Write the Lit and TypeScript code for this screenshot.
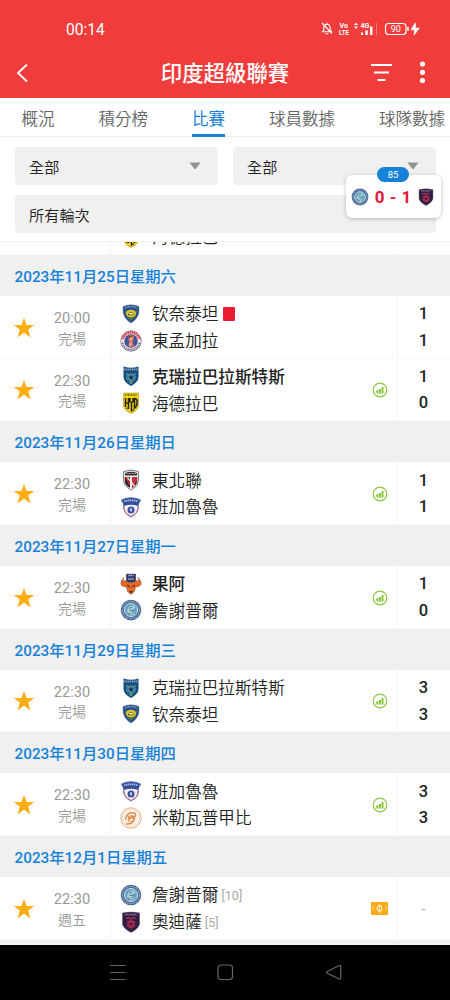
import {css, html, LitElement, nothing, svg} from 'lit';
import {customElement, property} from 'lit/decorators.js';
import {classMap} from 'lit/directives/class-map.js';

// every crest is drawn in a 44x44 box
const crests = {
	chennaiyin: svg`
		<path d="M6 7Q22 0 38 7V18Q36 32 22 40Q8 32 6 18Z" fill="#284f8d" stroke="#688398" stroke-width="1"/>
		<path d="M10 15H34Q33 28 22 35Q11 28 10 15Z" fill="#54733f"/>
		<ellipse cx="22" cy="21" rx="10" ry="7.5" fill="#dcc43c"/>
		<path d="M15 22Q22 13 29 22L25 26H18Z" fill="#7f852f"/>
		<path d="M18 21H26M20 24H25" stroke="#f2e276" stroke-width="2"/>
		<path d="M10 10Q22 4 34 10" stroke="#91abc4" stroke-width="2.5" stroke-dasharray="2 1" fill="none"/>`,
	eastBengal: svg`
		<circle cx="22" cy="22" r="20.5" fill="#f1e4e2" stroke="#85637d" stroke-width="1.5"/>
		<path d="M5 18A17.5 17.5 0 0 1 39 18" stroke="#d84151" stroke-width="5" stroke-dasharray="3 1" fill="none"/>
		<path d="M5 26A17.5 17.5 0 0 0 39 26" stroke="#4d5288" stroke-width="4" stroke-dasharray="2 2" fill="none"/>
		<circle cx="22" cy="22" r="13.5" fill="#41519b"/>
		<path d="M17 12Q24 7 28 13L27 20L25 24L29 33H16L19 25L16 18Z" fill="#d9755b"/>
		<path d="M22 15V20M21 25L20 32" stroke="#f0ccaa" stroke-width="3"/>
		<path d="M18 17Q17 11 24 12" stroke="#272d58" stroke-width="2" fill="none"/>`,
	kerala: svg`
		<path d="M7 3Q22 8 37 3V24Q36 35 22 42Q8 35 7 24Z" fill="#164b7f"/>
		<path d="M8 9H36" stroke="#829db0" stroke-width="4" stroke-dasharray="3 1"/>
		<path d="M12 15L16 19Q22 11 28 19L32 15V29L22 37L12 29Z" fill="#2977a0"/>
		<path d="M14 17L19 21H25L30 17M15 25L20 30H24L29 25" stroke="#a7b957" stroke-width="2" fill="none"/>
		<circle cx="22" cy="25" r="5" fill="#173965" stroke="#85adb2"/>
		<path d="M19 34L22 37L25 34" stroke="#d6bf4d" stroke-width="2" fill="none"/>`,
	hyderabad: svg`
		<path d="M7 2H37V29Q35 37 22 43Q9 37 7 29Z" fill="#f1d416" stroke="#8f7a16"/>
		<path d="M10 6H34" stroke="#665812" stroke-width="3" stroke-dasharray="2 1"/>
		<path d="M11 12V30M17 12V34M11 22H17M20 12V19L23 22L26 19V12M23 22V39M29 12V34M29 13Q35 13 34 21Q34 30 29 31" stroke="#262313" stroke-width="3" fill="none"/>
		<path d="M14 31V34M26 35V38" stroke="#262313" stroke-width="2.5"/>`,
	northEast: svg`
		<path d="M7 5Q22-1 37 5V21Q36 35 22 42Q8 35 7 21Z" fill="#eee" stroke="#777" stroke-width="2"/>
		<path d="M10 8Q22 3 34 8V13H10Z" fill="#363033"/>
		<path d="M12 9H32" stroke="#bd9d9f" stroke-width="2" stroke-dasharray="2 1"/>
		<path d="M9.5 16H20V38Q10 33 9.5 22Z" fill="#252224"/>
		<path d="M24 16H34.5V22Q34 33 24 38Z" fill="#252224"/>
		<path d="M24 16H34V23L27 36L24 37ZM10 17L14 16L20 28V35Z" fill="#c92c3a"/>
		<path d="M15 17L29 34" stroke="#f1e8e8" stroke-width="2.5"/>`,
	bengaluru: svg`
		<path d="M3 8Q22-1 41 8Q39 14 36 16Q40 34 22 42Q4 34 8 16Q5 14 3 8Z" fill="#f2eff5" stroke="#4764a5" stroke-width="2"/>
		<path d="M4 8Q22 0 40 8L36 20Q22 15 8 20Z" fill="#344e9a"/>
		<path d="M8 11Q22 6 36 11" stroke="#a9b7da" stroke-width="3.5" stroke-dasharray="3 1" fill="none"/>
		<path d="M8 22Q7 33 22 41" stroke="#d97179" stroke-width="2" fill="none"/>
		<path d="M36 22Q37 33 22 41" stroke="#d97179" stroke-width="2" fill="none"/>
		<circle cx="22" cy="28" r="7" fill="#354c9e"/>
		<path d="M19 27L22 23L25 27L22 33Z" fill="#b6c5e6"/>`,
	goa: svg`
		<path d="M13 2H31V15L36 16Q39 14 36 9Q44 16 42 23Q39 28 31 28L29 37L22 43L15 37L13 28Q5 28 2 23Q0 16 8 9Q5 14 8 16L13 15Z" fill="#e66a24" stroke="#7b463f"/>
		<path d="M13 2H31V17Q22 21 13 17Z" fill="#27376b"/>
		<path d="M17 5H27M16 12H28" stroke="#b4bdd0" stroke-width="3" stroke-dasharray="3 1"/>
		<path d="M14 24L20 28M30 24L24 28" stroke="#5b2d2b" stroke-width="2.5"/>
		<path d="M18 36H26L22 41Z" fill="#3b2a45"/>`,
	jamshedpur: svg`
		<circle cx="22" cy="22" r="20.5" fill="#48699a"/>
		<circle cx="22" cy="22" r="17" fill="none" stroke="#b9cadb" stroke-width="2.2" stroke-dasharray="1.5 1.5"/>
		<circle cx="22" cy="22" r="13" fill="#5fa5c0" stroke="#d5e4ea" stroke-width="2"/>
		<path d="M14 27Q14 13 27 13L31 18L26 20L28 28L22 33L20 27Z" fill="#b5d3da"/>
		<path d="M18 19L25 16M19 23L27 22L23 29" stroke="#3f7d9e" stroke-width="2" fill="none"/>
		<path d="M15 29L20 31" stroke="#bb6a64" stroke-width="2"/>`,
	mizoram: svg`
		<circle cx="22" cy="22" r="20.5" fill="#fbf1e6" stroke="#dc9d67" stroke-width="1.5"/>
		<circle cx="22" cy="22" r="17" fill="none" stroke="#e8bd96" stroke-width="2" stroke-dasharray="1.5 2.5"/>
		<path d="M11 25Q14 9 28 12Q34 15 29 20Q18 14 17 25Q23 19 29 23Q26 35 12 34" fill="none" stroke="#dc8f51" stroke-width="3"/>
		<path d="M15 19L25 17M16 29L27 28" stroke="#e4a36e" stroke-width="2"/>`,
	odisha: svg`
		<path d="M5 4Q22 0 39 4V27Q36 36 22 43Q8 36 5 27Z" fill="#2d2044" stroke="#64446a"/>
		<path d="M10 7H34" stroke="#8b738f" stroke-width="3" stroke-dasharray="3 1"/>
		<path d="M12 15L17 13L22 16L27 13L32 15" stroke="#c12e57" stroke-width="2.5" fill="none"/>
		<circle cx="22" cy="26" r="9" fill="#872349"/>
		<path d="M15 21L20 24L22 20L24 24L29 21M15 29L20 27L22 34L24 27L29 29" stroke="#d13b61" stroke-width="1.6" fill="none"/>
		<circle cx="22" cy="26" r="3" fill="#331b3a"/>`,
} as const;

type Crest = keyof typeof crests;

interface Team {
	crest: Crest;
	name: string;
	score?: number;
	bold?: boolean;
	redCard?: boolean;
	rank?: number;
}

interface Match {
	time: string;
	status: string;
	stats?: boolean;
	home: Team;
	away: Team;
}

const done = '完場';

const days: {date: string, matches: Match[]}[] = [
	{date: '2023年11月25日星期六', matches: [
		{time: '20:00', status: done,
			home: {crest: 'chennaiyin', name: '钦奈泰坦', score: 1, redCard: true},
			away: {crest: 'eastBengal', name: '東孟加拉', score: 1}},
		{time: '22:30', status: done, stats: true,
			home: {crest: 'kerala', name: '克瑞拉巴拉斯特斯', score: 1, bold: true},
			away: {crest: 'hyderabad', name: '海德拉巴', score: 0}},
	]},
	{date: '2023年11月26日星期日', matches: [
		{time: '22:30', status: done, stats: true,
			home: {crest: 'northEast', name: '東北聯', score: 1},
			away: {crest: 'bengaluru', name: '班加魯魯', score: 1}},
	]},
	{date: '2023年11月27日星期一', matches: [
		{time: '22:30', status: done, stats: true,
			home: {crest: 'goa', name: '果阿', score: 1, bold: true},
			away: {crest: 'jamshedpur', name: '詹謝普爾', score: 0}},
	]},
	{date: '2023年11月29日星期三', matches: [
		{time: '22:30', status: done, stats: true,
			home: {crest: 'kerala', name: '克瑞拉巴拉斯特斯', score: 3},
			away: {crest: 'chennaiyin', name: '钦奈泰坦', score: 3}},
	]},
	{date: '2023年11月30日星期四', matches: [
		{time: '22:30', status: done, stats: true,
			home: {crest: 'bengaluru', name: '班加魯魯', score: 3},
			away: {crest: 'mizoram', name: '米勒瓦普甲比', score: 3}},
	]},
	{date: '2023年12月1日星期五', matches: [
		{time: '22:30', status: '週五',
			home: {crest: 'jamshedpur', name: '詹謝普爾', rank: 10},
			away: {crest: 'odisha', name: '奧迪薩', rank: 5}},
	]},
];

const previous: Match = {
	time: '', status: '',
	home: {crest: 'goa', name: ''},
	away: {crest: 'hyderabad', name: '海德拉巴'},
};

const tabs = ['概況', '積分榜', '比賽', '球員數據', '球隊數據'];
const activeTab = '比賽';

@customElement('team-crest')
export class TeamCrest extends LitElement {
	@property()
	team: Crest = 'goa';

	protected render() {
		return html`<svg viewBox="0 0 44 44">${crests[this.team]}</svg>`;
	}

	static styles = css`
		:host {
			display: block;
			flex: none;
			width: 22px;
			height: 22px;
		}
		svg {
			display: block;
			width: 100%;
			height: 100%;
		}
	`;
}

@customElement('match-row')
export class MatchRow extends LitElement {
	@property({attribute: false})
	match!: Match;

	protected render() {
		const {time, status, home, away, stats} = this.match;
		const played = home.score !== undefined;
		return html`
		<div class="star">
			<svg width="22" height="22" viewBox="0 0 22 22"><path d="M11 .8L13.6 8H21.2L15.2 12.6L17.4 20.2L11 15.8L4.6 20.2L6.8 12.6L.8 8H8.4Z" fill="#ffad13"/></svg>
		</div>
		<div class="when"><span>${time}</span><span class="status">${status}</span></div>
		<div class="teams">${this.renderTeam(home)}${this.renderTeam(away)}</div>
		<div class="extra">${stats ? this.renderStats() : played || !time ? nothing : this.renderPitch()}</div>
		<div class="score">
			${played ? html`<b>${home.score}</b><b>${away.score}</b>` : time ? html`<span class="none">-</span>` : nothing}
		</div>
		`;
	}

	private renderTeam(team: Team) {
		return html`
		<div class="team">
			<team-crest team=${team.crest}></team-crest>
			<span class=${classMap({name: true, bold: !!team.bold})}>${team.name}</span>
			${team.redCard ? html`<i class="card"></i>` : nothing}
			${team.rank ? html`<span class="rank">[${team.rank}]</span>` : nothing}
		</div>
		`;
	}

	private renderStats() {
		return html`
		<svg width="16" height="16" viewBox="0 0 16 16">
			<circle cx="8" cy="8" r="6.8" fill="none" stroke="#8ac53f" stroke-width="1.2"/>
			<path d="M5.3 8.2V11.6M7.9 7V11.6M10.5 4.8V11.6" stroke="#8ac53f" stroke-width="2"/>
		</svg>`;
	}

	private renderPitch() {
		return html`
		<svg class="pitch" width="17" height="13" viewBox="0 0 17 13">
			<rect width="17" height="13" rx="1" fill="#fba918"/>
			<path d="M8.5 1.5V11.5M2 4.5V8.5M15 4.5V8.5" stroke="#ffe1a0" fill="none"/>
			<ellipse cx="8.5" cy="6.5" rx="2.2" ry="2.8" stroke="#fff0cf" stroke-width="1.2" fill="none"/>
		</svg>`;
	}

	static styles = css`
		:host {
			display: grid;
			grid-template-columns: 48px 62px 253px 34px 53px;
			height: 62.5px;
			box-sizing: border-box;
			background: #fff;
			border-bottom: 1px solid #f8f8f8;
		}
		.star, .extra {
			display: flex;
			align-items: center;
			justify-content: center;
			padding-top: 1.6px;
		}
		.when {
			display: flex;
			flex-direction: column;
			padding: 12px 14px 0 0;
			text-align: center;
			font-size: 14.6px;
			line-height: 20.5px;
			color: #999;
		}
		.status {
			font-size: 14px;
			font-weight: 350;
		}
		.teams {
			padding: 5px 0 0 9px;
			border-left: 1px solid #f1f1f1;
		}
		.team {
			display: flex;
			align-items: center;
			height: 26.6px;
		}
		.team team-crest {
			margin-bottom: 1px;
		}
		.name {
			margin-left: 10px;
			padding-top: 2px;
			font-size: 16.6px;
			font-weight: 350;
			line-height: 26px;
			color: #222;
		}
		.bold {
			font-weight: 500;
		}
		.card {
			width: 12px;
			height: 14px;
			margin: 0 0 1px 5px;
			border-radius: 1px;
			background: #ea1a31;
		}
		.rank {
			margin-left: 3px;
			font-size: 12.6px;
			color: #aaa;
		}
		.pitch {
			margin-right: 2px;
		}
		.score {
			display: flex;
			flex-direction: column;
			justify-content: center;
			padding-top: 2px;
			border-left: 1px solid #f5f5f5;
			text-align: center;
			font-size: 16.5px;
			line-height: 26.6px;
			color: #222;
		}
		b {
			margin-right: 1px;
			font-weight: 500;
		}
		.none {
			margin-right: 1px;
			font-size: 14px;
			color: #aaa;
		}
	`;
}

@customElement('app-root')
export class AppRoot extends LitElement {
	protected render() {
		return html`
		<header>
			<div class="status-bar">
				<span class="clock">00:14</span>
				${this.renderIndicators()}
			</div>
			<div class="title-bar">
				<svg width="14" height="20" viewBox="0 0 14 20"><path d="M11 1.5L2 10L11 18.5" fill="none" stroke="#fff" stroke-width="1.8"/></svg>
				<h1>印度超級聯賽</h1>
				<svg width="56" height="24" viewBox="0 0 56 24">
					<path d="M1 4H22M4 11.5H19M7.5 19H15.5" stroke="#fff" stroke-width="1.8"/>
					<g fill="#fff"><circle cx="52.5" cy="3" r="2.6"/><circle cx="52.5" cy="11.3" r="2.6"/><circle cx="52.5" cy="19.6" r="2.6"/></g>
				</svg>
			</div>
		</header>
		<nav>${tabs.map(tab => html`<span class=${classMap({tab: true, active: tab === activeTab})}>${tab}</span>`)}</nav>
		<section class="filters">
			<div class="select">全部${this.renderArrow()}</div>
			<div class="select">全部${this.renderArrow()}</div>
			<div class="select wide">所有輪次</div>
		</section>
		<main>
			<match-row class="previous" .match=${previous}></match-row>
			${days.map(day => html`
				<h2>${day.date}</h2>
				${day.matches.map(match => html`<match-row .match=${match}></match-row>`)}
			`)}
		</main>
		<footer>
			<svg width="17" height="17" viewBox="0 0 17 17"><path d="M1 1.5H16.5M1 8.5H16.5M1 15.5H16.5"/></svg>
			<svg width="17" height="17" viewBox="0 0 17 17"><rect x="1" y="1" width="14.5" height="14.5" rx="3"/></svg>
			<svg width="17" height="17" viewBox="0 0 17 17"><path d="M14.2 1.5Q15.7 .8 15.7 2.5V14Q15.7 15.8 14.2 15L2.2 9.2Q.8 8.3 2.2 7.5Z"/></svg>
		</footer>
		<aside>
			<span class="minute">85</span>
			<team-crest team="jamshedpur"></team-crest>
			<span class="live">0 - 1</span>
			<team-crest team="odisha"></team-crest>
		</aside>
		`;
	}

	private renderArrow() {
		return html`<svg width="12" height="8" viewBox="0 0 12 8"><path d="M.5 .5H11.5L7 6.6Q6 7.6 5 6.6Z" fill="#949494"/></svg>`;
	}

	private renderIndicators() {
		return html`
		<svg width="102" height="18" viewBox="0 0 102 18" fill="none" stroke="#fff">
			<path d="M2.5 11.8H11.5L10.2 9.8V7.5Q9.8 4.6 7 4.3Q4.2 4.6 3.8 7.5V9.8ZM5.5 13.8H8.5M7 4V2.8M2 3L12 13.5" stroke-width="1.1"/>
			<g fill="#fff" stroke="none" font-weight="700">
				<text x="19.5" y="7.8" font-size="6.6" textLength="8.5" lengthAdjust="spacingAndGlyphs">Vo</text>
				<text x="19" y="15.4" font-size="6.6" textLength="10" lengthAdjust="spacingAndGlyphs">LTE</text>
				<text x="40.5" y="8" font-size="7.5" textLength="9" lengthAdjust="spacingAndGlyphs">4G</text>
				<path d="M34 5L36 2.5L38 5ZM34 6.5L36 9L38 6.5Z"/>
				<path d="M41 12.5H43V15H41ZM45.3 10.5H47.8V15H45.3ZM50 6.5H52.5V15H50Z"/>
			</g>
			<path d="M56.5 3V15" stroke-opacity=".3"/>
			<rect x="65.5" y="3.5" width="20.5" height="11" rx="3" stroke-width="1.2"/>
			<path d="M88 7V11" stroke-width="1.5"/>
			<text x="70.7" y="12.2" font-size="9" fill="#fff" stroke="none">90</text>
			<path d="M95.2 2.8L91 9.8H94.5L94 15.2L99.5 8H95.8Z" fill="#fff" stroke="#fff" stroke-width=".6"/>
		</svg>`;
	}

	static styles = css`
		:host {
			position: relative;
			display: flex;
			flex-direction: column;
			width: 450px;
			height: 1000px;
			overflow: hidden;
			background: #fff;
			font-family: Roboto, "Noto Sans CJK TC", sans-serif;
		}
		header {
			flex: none;
			height: 98px;
			background: #f03d3b;
			color: #fff;
		}
		.status-bar {
			display: flex;
			align-items: center;
			justify-content: space-between;
			height: 38px;
			padding: 10px 28px 0 66px;
		}
		.clock {
			padding-top: 1px;
			font-size: 15.6px;
		}
		.title-bar {
			display: grid;
			grid-template-columns: 56px 1fr 56px;
			align-items: center;
			height: 49px;
			padding: 0 24px 0 16px;
		}
		h1 {
			margin: 0;
			padding: 2px 0 0 8px;
			text-align: center;
			font-size: 21.4px;
			font-weight: 500;
			line-height: 30px;
		}
		nav {
			flex: none;
			display: flex;
			gap: 44px;
			height: 38px;
			padding-left: 21.5px;
			border-bottom: 1px solid #eee;
			font-size: 16.5px;
			line-height: 43px;
			white-space: nowrap;
			color: #666;
		}
		.tab {
			flex: none;
			box-sizing: border-box;
			height: 39px;
			font-weight: 350;
		}
		.active {
			border-bottom: 3px solid #1681d8;
			color: #1681d8;
			font-weight: 400;
		}
		.filters {
			flex: none;
			display: grid;
			grid-template-columns: 1fr 1fr;
			grid-auto-rows: 38px;
			gap: 10px 15px;
			box-sizing: border-box;
			height: 105px;
			padding: 10px 14.5px 0;
			border-bottom: 1px solid #f2f2f2;
		}
		.select {
			display: flex;
			align-items: center;
			justify-content: space-between;
			padding: 0 17px 0 14.5px;
			border-radius: 4px;
			background: #f0f0f0;
			font-size: 15.2px;
			font-weight: 350;
			color: #222;
		}
		.wide {
			grid-column: 1 / -1;
		}
		main {
			flex: 1;
			min-height: 0;
			overflow: hidden;
			background: #f0f0f0;
		}
		.previous {
			margin-top: -49.5px;
		}
		h2 {
			box-sizing: border-box;
			height: 41.2px;
			margin: 0;
			padding: 2px 0 0 14.5px;
			font-size: 15.3px;
			font-weight: 500;
			line-height: 41.2px;
			color: #1681d8;
		}
		footer {
			flex: none;
			display: flex;
			align-items: center;
			justify-content: center;
			gap: 91px;
			height: 55px;
			background: #000;
		}
		footer svg {
			fill: none;
			stroke: #666;
			stroke-width: 1.2;
		}
		aside {
			position: absolute;
			top: 175px;
			left: 346px;
			display: flex;
			align-items: center;
			justify-content: space-between;
			box-sizing: border-box;
			width: 95px;
			height: 43px;
			padding: 0 6px 0 5px;
			border-radius: 6px;
			background: #fff;
			box-shadow: 0 1px 4px rgb(0 0 0 / 25%);
		}
		aside team-crest {
			width: 18px;
			height: 18px;
		}
		.live {
			font-size: 17px;
			font-weight: 700;
			word-spacing: 1px;
			color: #e51937;
		}
		.minute {
			position: absolute;
			top: -8px;
			left: 31px;
			width: 32px;
			border-radius: 8px;
			background: #1681d8;
			text-align: center;
			font-size: 9.5px;
			line-height: 15px;
			color: #fff;
		}
	`;
}
